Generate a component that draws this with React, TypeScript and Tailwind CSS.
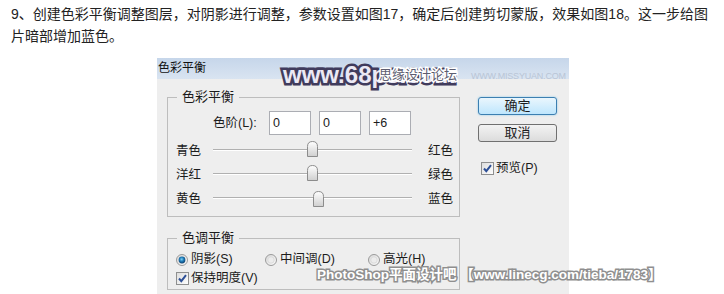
import React from "react";

const Thumb = () => (
  <svg width="11" height="16" viewBox="0 0 11 16" className="absolute top-[2px]">
    <defs>
      <linearGradient id="tg" x1="0" y1="0" x2="0" y2="1">
        <stop offset="0" stopColor="#ffffff" />
        <stop offset="1" stopColor="#cfcfcf" />
      </linearGradient>
    </defs>
    <path d="M0.5 15.5 V5.5 Q0.5 0.5 5.5 0.5 Q10.5 0.5 10.5 5.5 V15.5 Z" fill="url(#tg)" stroke="#8c8c8c" />
  </svg>
);

const SliderRow = ({ left, right, pos }: { left: string; right: string; pos: string }) => (
  <div className="flex h-[24px] items-center">
    <span className="w-[37px]">{left}</span>
    <div className="relative h-[24px] w-[199px]">
      <div className="absolute left-0 right-0 top-[10px] h-[2px] border-t border-[#b0b0b0] bg-white" />
      <div className={pos}>
        <Thumb />
      </div>
    </div>
    <span className="ml-[16px]">{right}</span>
  </div>
);

const Radio = ({ on }: { on?: boolean }) => (
  <svg width="12" height="12" viewBox="0 0 12 12" className="shrink-0">
    <defs>
      <radialGradient id="rb" cx="0.45" cy="0.4" r="0.6">
        <stop offset="0" stopColor="#7fd0f5" />
        <stop offset="0.5" stopColor="#1f7cb8" />
        <stop offset="1" stopColor="#0d3f6e" />
      </radialGradient>
      <linearGradient id="rg" x1="0" y1="0" x2="1" y2="1">
        <stop offset="0" stopColor="#d8d8d8" />
        <stop offset="1" stopColor="#fbfbfb" />
      </linearGradient>
    </defs>
    <circle cx="6" cy="6" r="5.5" fill="url(#rg)" stroke="#9a9a9a" />
    {on ? <circle cx="6" cy="6" r="3.4" fill="url(#rb)" /> : <circle cx="6" cy="6" r="3.2" fill="#ececec" stroke="#d0d0d0" strokeWidth="0.6" />}
  </svg>
);

const Check = () => (
  <svg width="13" height="13" viewBox="0 0 13 13" className="shrink-0">
    <defs>
      <linearGradient id="cg" x1="0" y1="0" x2="1" y2="1">
        <stop offset="0" stopColor="#dcdcdc" />
        <stop offset="1" stopColor="#ffffff" />
      </linearGradient>
    </defs>
    <rect x="0.5" y="0.5" width="12" height="12" fill="url(#cg)" stroke="#8e8f8f" />
    <path d="M3 6.5 L5.3 9.2 L10 3.2" fill="none" stroke="#2d4f96" strokeWidth="2" />
  </svg>
);

export default function App() {
  return (
    <div className="relative h-[294px] w-[724px] overflow-hidden bg-white font-['Liberation_Sans','Noto_Sans_CJK_SC',sans-serif]">
      <p className="pl-[11px] pt-[3px] text-[14px] leading-[22px] text-[#222]">
        9、创建色彩平衡调整图层，对阴影进行调整，参数设置如图17，确定后创建剪切蒙版，效果如图18。这一步给图
        <br />
        片暗部增加蓝色。
      </p>

      <div className="relative ml-[157px] mt-[11px] h-[240px] w-[412px] bg-[#eeeeee] text-[12.5px] text-[#1c1c1c]">
        <div className="h-[21px] bg-gradient-to-b from-[#c6d6ea] to-[#d9e4f1] pl-[1px] text-[12px] leading-[21px] text-[#111]">
          色彩平衡
        </div>

        <div className="flex">
          <div className="w-[303px] pl-[10px] pt-[18px]">
            <div className="relative h-[120px] border border-[#bdbdbd] pl-[8px] pt-[13px]">
              <span className="absolute -top-[9px] left-[9px] bg-[#eeeeee] px-[5px] text-[13px] leading-[16px]">色彩平衡</span>
              <div className="flex h-[24px] items-center">
                <span className="w-[37px]" />
                <span className="w-[56px]">色阶(L):</span>
                <div className="flex gap-[8px]">
                  <div className="h-[24px] w-[42px] border border-[#abadb3] bg-white pl-[3px] leading-[22px]">0</div>
                  <div className="h-[24px] w-[42px] border border-[#abadb3] bg-white pl-[3px] leading-[22px]">0</div>
                  <div className="h-[24px] w-[42px] border border-[#abadb3] bg-white pl-[3px] leading-[22px]">+6</div>
                </div>
              </div>
              <div className="mt-[4px]">
                <SliderRow left="青色" right="红色" pos="absolute left-[94px] top-0" />
                <SliderRow left="洋红" right="绿色" pos="absolute left-[94px] top-0" />
                <SliderRow left="黄色" right="蓝色" pos="absolute left-[100px] top-[2px]" />
              </div>
            </div>

            <div className="relative mt-[21px] h-[52px] border border-[#bdbdbd] pl-[8px] pt-[11px]">
              <span className="absolute -top-[9px] left-[9px] bg-[#eeeeee] px-[5px] text-[13px] leading-[16px]">色调平衡</span>
              <div className="flex h-[19px] items-center">
                <div className="flex w-[89px] items-center gap-[3px]">
                  <Radio on />
                  <span>阴影(S)</span>
                </div>
                <div className="flex w-[103px] items-center gap-[3px]">
                  <Radio />
                  <span>中间调(D)</span>
                </div>
                <div className="flex items-center gap-[3px]">
                  <Radio />
                  <span>高光(H)</span>
                </div>
              </div>
              <div className="flex h-[19px] items-center gap-[2px]">
                <Check />
                <span>保持明度(V)</span>
              </div>
            </div>
          </div>

          <div className="pl-[18px] pt-[18px]">
            <div className="flex h-[18px] w-[79px] items-center justify-center rounded-[3px] border border-[#3c7fb1] bg-gradient-to-b from-[#eaf6fd] to-[#bee6fd] text-[13px] shadow-[0_0_2px_#7fc4ea]">
              确定
            </div>
            <div className="mt-[9px] flex h-[18px] w-[79px] items-center justify-center rounded-[3px] border border-[#707070] bg-gradient-to-b from-[#f3f3f3] to-[#dcdcdc] text-[13px]">
              取消
            </div>
            <div className="ml-[3px] mt-[17px] flex items-center gap-[2px]">
              <Check />
              <span>预览(P)</span>
            </div>
          </div>
        </div>

        <div className="absolute left-[126px] top-[3px] text-[24px] font-bold leading-[28px] text-[#ebe9f4] [-webkit-text-stroke:5px_#403b5c] [paint-order:stroke_fill]">
          www.68ps.com
        </div>
        <div className="absolute left-[222px] top-[9px] text-[13px] leading-[16px] text-[#5d5d70] [-webkit-text-stroke:3px_#ffffff] [paint-order:stroke_fill]">
          思缘设计论坛
        </div>
        <div className="absolute left-[314px] top-[12px] text-[9px] leading-[12px] tracking-[-0.2px] text-[#b9c5d6]">
          WWW.MISSYUAN.COM
        </div>
      </div>

      <div className="absolute left-[317px] top-[266px] whitespace-nowrap text-[13.5px] font-bold leading-[18px] text-white [-webkit-text-stroke:3px_#8f8f8f] [paint-order:stroke_fill]">
        PhotoShop平面设计吧 <span>【www.linecg.com/tieba/1783】</span>
      </div>
    </div>
  );
}
